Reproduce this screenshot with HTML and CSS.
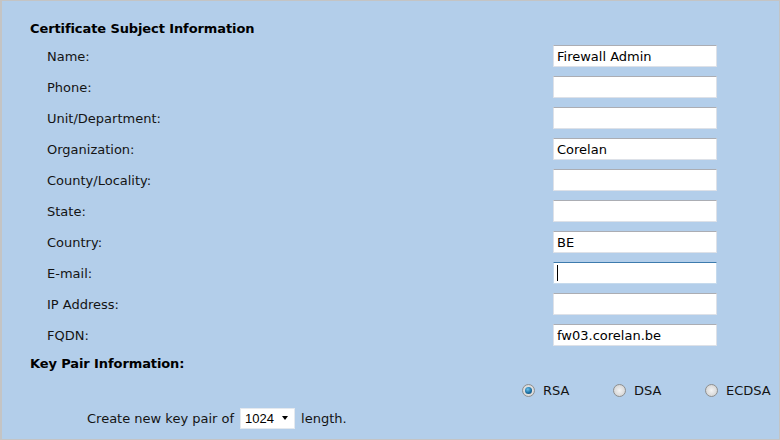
FILE: index.html
```html
<!DOCTYPE html>
<html>
<head>
<meta charset="utf-8">
<link rel="stylesheet" href="styles.css">
</head>
<body>
<div class="page">
  <h2 class="section-title">Certificate Subject Information</h2>
  <div class="fields">
    <label class="lbl">Name:</label><input class="txt" type="text" value="Firewall Admin">
    <label class="lbl">Phone:</label><input class="txt" type="text" value="">
    <label class="lbl">Unit/Department:</label><input class="txt" type="text" value="">
    <label class="lbl">Organization:</label><input class="txt" type="text" value="Corelan">
    <label class="lbl">County/Locality:</label><input class="txt" type="text" value="">
    <label class="lbl">State:</label><input class="txt" type="text" value="">
    <label class="lbl">Country:</label><input class="txt" type="text" value="BE">
    <label class="lbl">E-mail:</label><span class="focus-wrap"><input class="txt focused" type="text" value=""><span class="caret"></span></span>
    <label class="lbl">IP Address:</label><input class="txt" type="text" value="">
    <label class="lbl">FQDN:</label><input class="txt" type="text" value="fw03.corelan.be">
  </div>
  <h2 class="section-title kp">Key Pair Information:</h2>
  <div class="algos">
    <span class="opt"><span class="radio checked"></span><span>RSA</span></span>
    <span class="opt"><span class="radio"></span><span>DSA</span></span>
    <span class="opt"><span class="radio"></span><span>ECDSA</span></span>
  </div>
  <div class="keylen">
    <span>Create new key pair of</span>
    <span class="select"><span class="sel-val">1024</span><span class="arrow"></span></span>
    <span>length.</span>
  </div>
</div>
</body>
</html>
```
FILE: styles.css
```css
html, body {
  margin: 0;
  padding: 0;
}
body {
  font-family: "DejaVu Sans", Verdana, sans-serif;
  font-size: 13px;
  color: #141414;
}
.page {
  box-sizing: border-box;
  width: 780px;
  height: 440px;
  background: #b3ceea;
  border: 1px solid #c4c4c4;
  border-left: 2px solid #c4c4c4;
  padding: 20px 0 0 28px;
}
.section-title {
  margin: 0 0 8px 0;
  font-size: 13px;
  line-height: 16px;
  font-weight: bold;
  letter-spacing: -0.1px;
  color: #000;
}
.fields {
  display: grid;
  grid-template-columns: 506px 164px;
  row-gap: 9px;
  padding-left: 17px;
}
.lbl {
  display: flex;
  align-items: center;
  height: 22px;
}
.txt {
  box-sizing: border-box;
  width: 164px;
  height: 22px;
  margin: 0;
  padding: 0 3px;
  border: 1px solid #dde1e8;
  border-top-color: #abadb3;
  background: #fff;
  font-family: "DejaVu Sans", Verdana, sans-serif;
  font-size: 13px;
  color: #000;
  outline: none;
}
.focus-wrap {
  position: relative;
  display: block;
  width: 164px;
  height: 22px;
}
.txt.focused {
  border-color: #c5daed;
  border-top-color: #3d7bad;
}
.caret {
  position: absolute;
  left: 4px;
  top: 3px;
  width: 1px;
  height: 16px;
  background: #000;
}
.kp {
  margin-top: 10px;
  margin-bottom: 10px;
}
.algos {
  display: flex;
  padding-left: 492px;
  height: 16px;
  align-items: center;
}
.opt {
  display: flex;
  align-items: center;
  gap: 8px;
}
.opt:nth-child(1) { width: 91px; }
.opt:nth-child(2) { width: 92px; }
.radio {
  box-sizing: border-box;
  width: 13px;
  height: 13px;
  border-radius: 50%;
  border: 1px solid #8e8f8f;
  background: radial-gradient(circle at 50% 50%, #f4f4f4 0, #dcdcdc 60%, #cfcfcf 100%);
  position: relative;
}
.radio.checked::after {
  content: "";
  position: absolute;
  left: 2px;
  top: 2px;
  width: 7px;
  height: 7px;
  border-radius: 50%;
  background: radial-gradient(circle at 40% 35%, #6cc4ee 0, #1a6fa3 55%, #0b3f66 100%);
}
.keylen {
  display: flex;
  align-items: center;
  gap: 6px;
  margin-top: 9px;
  padding-left: 57px;
  height: 22px;
}
.select {
  box-sizing: border-box;
  display: flex;
  align-items: center;
  justify-content: space-between;
  width: 55px;
  height: 21px;
  padding: 0 6px 0 4px;
  background: #fff;
  border: 1px solid #e4e9ef;
  font-family: "Liberation Sans", Arial, sans-serif;
  font-size: 13px;
  color: #000;
}
.arrow {
  width: 0;
  height: 0;
  border-left: 3.5px solid transparent;
  border-right: 3.5px solid transparent;
  border-top: 4px solid #000;
}
```
